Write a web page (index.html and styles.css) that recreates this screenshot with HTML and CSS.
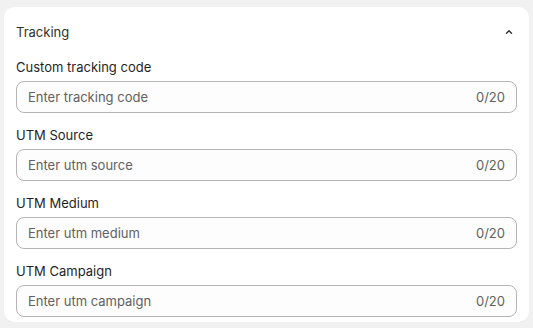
FILE: index.html
```html
<!DOCTYPE html>
<html lang="en">
<head>
    <meta charset="UTF-8">
    <meta name="viewport" content="width=device-width, initial-scale=1.0">
    <title>Tracking</title>
    <link rel="stylesheet" href="styles.css">
</head>
<body>
    <div class="card">
        <div class="card-header">
            <span class="card-title">Tracking</span>
            <svg class="chevron" width="12" height="12" viewBox="0 0 12 12" aria-hidden="true">
                <path d="M3.5 7.2 L6 4.7 L8.5 7.2" fill="none" stroke="#303030" stroke-width="1.4" stroke-linecap="round" stroke-linejoin="round"/>
            </svg>
        </div>

        <!-- Champs de suivi -->
        <div class="field">
            <label for="tracking-code">Custom tracking code</label>
            <div class="input-box">
                <input type="text" id="tracking-code" placeholder="Enter tracking code" maxlength="20">
                <span class="counter">0/20</span>
            </div>
        </div>
        <div class="field">
            <label for="utm-source">UTM Source</label>
            <div class="input-box">
                <input type="text" id="utm-source" placeholder="Enter utm source" maxlength="20">
                <span class="counter">0/20</span>
            </div>
        </div>
        <div class="field">
            <label for="utm-medium">UTM Medium</label>
            <div class="input-box">
                <input type="text" id="utm-medium" placeholder="Enter utm medium" maxlength="20">
                <span class="counter">0/20</span>
            </div>
        </div>
        <div class="field">
            <label for="utm-campaign">UTM Campaign</label>
            <div class="input-box">
                <input type="text" id="utm-campaign" placeholder="Enter utm campaign" maxlength="20">
                <span class="counter">0/20</span>
            </div>
        </div>
    </div>
</body>
</html>
```

FILE: styles.css
```css
* {
    margin: 0;
    padding: 0;
    box-sizing: border-box;
}

body {
    font-family: Inter, "Noto Sans", sans-serif;
    font-size: 13px;
    color: #303030;
    background-color: #f1f1f1;
    padding: 7px 4px 0 4px;
}

.card {
    background-color: #fff;
    border-radius: 10px;
    padding: 15px 12px 5px 12px;
    box-shadow: 0 1px 0 rgba(0, 0, 0, 0.04);
}

.card-header {
    display: flex;
    justify-content: space-between;
    align-items: center;
    height: 20px;
    margin-bottom: 15px;
}

.card-title {
    line-height: 20px;
}

.chevron {
    margin-right: 2px;
}

.field {
    display: flex;
    flex-direction: column;
    gap: 4px;
    margin-bottom: 12px;
}

.field:last-child {
    margin-bottom: 0;
}

.field label {
    line-height: 20px;
    color: #1f1f1f;
}

.input-box {
    display: flex;
    align-items: center;
    height: 32px;
    padding: 0 11px;
    border: 1px solid #b5b5b5;
    border-radius: 8px;
    background-color: #fdfdfd;
}

.input-box input {
    flex: 1;
    border: none;
    outline: none;
    background: transparent;
    font-family: inherit;
    font-size: 13px;
    color: #303030;
}

.input-box input::placeholder {
    color: #616161;
}

.counter {
    color: #616161;
}
```
